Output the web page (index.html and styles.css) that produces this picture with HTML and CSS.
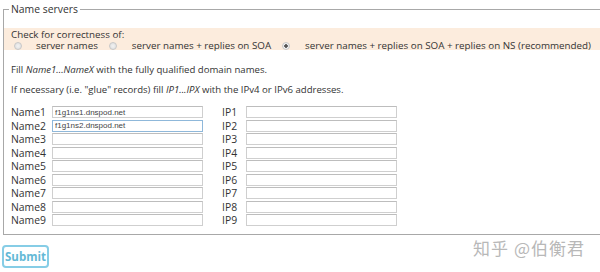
FILE: index.html
```html
<!DOCTYPE html>
<html lang="en">
<head>
  <meta charset="UTF-8" />
  <title>Name servers</title>
  <link rel="stylesheet" href="styles.css">
</head>
<body>
  <form class="ns-form">
    <fieldset class="ns-box">
      <legend>Name servers</legend>

      <div class="check-band">
        <div>Check for correctness of:</div>
        <div class="check-options">
          <label><input type="radio" name="check" class="radio first"> server names</label>
          <label><input type="radio" name="check" class="radio"> server names + replies on SOA</label>
          <label><input type="radio" name="check" class="radio" checked> server names + replies on SOA + replies on NS (recommended)</label>
        </div>
      </div>

      <p class="hint">Fill <em>Name1...NameX</em> with the fully qualified domain names.</p>
      <p class="hint second">If necessary (i.e. "glue" records) fill <em>IP1...IPX</em> with the IPv4 or IPv6 addresses.</p>

      <div class="ns-grid">
        <label class="name-label">Name1</label><input class="field" type="text" value="f1g1ns1.dnspod.net">
        <label class="ip-label">IP1</label><input class="field" type="text">
        <label class="name-label">Name2</label><input class="field focused" type="text" value="f1g1ns2.dnspod.net">
        <label class="ip-label">IP2</label><input class="field" type="text">
        <label class="name-label">Name3</label><input class="field" type="text">
        <label class="ip-label">IP3</label><input class="field" type="text">
        <label class="name-label">Name4</label><input class="field" type="text">
        <label class="ip-label">IP4</label><input class="field" type="text">
        <label class="name-label">Name5</label><input class="field" type="text">
        <label class="ip-label">IP5</label><input class="field" type="text">
        <label class="name-label">Name6</label><input class="field" type="text">
        <label class="ip-label">IP6</label><input class="field" type="text">
        <label class="name-label">Name7</label><input class="field" type="text">
        <label class="ip-label">IP7</label><input class="field" type="text">
        <label class="name-label">Name8</label><input class="field" type="text">
        <label class="ip-label">IP8</label><input class="field" type="text">
        <label class="name-label">Name9</label><input class="field" type="text">
        <label class="ip-label">IP9</label><input class="field" type="text">
      </div>
    </fieldset>

    <div class="footer">
      <button type="button" class="submit">Submit</button>
      <span class="watermark">知乎 @伯衡君</span>
    </div>
  </form>
</body>
</html>
```

FILE: styles.css
```css
body {
  margin: 0;
  padding: 1px 0 0 3px;
  font-family: "Open Sans", "Noto Sans", sans-serif;
  font-size: 10.4px;
  color: #333;
  background: #fff;
  overflow: hidden;
}
.ns-box {
  width: 640px;
  margin: 0;
  padding: 0 0 8px 7px;
  border: 1px solid #a8a8a8;
}
.ns-box legend {
  padding: 0 2px;
  margin-left: -2px;
  line-height: 16px;
}
.check-band {
  margin: 11px 0 0 -7px;
  padding: 1px 0 0 7px;
  background: #fcecdd;
  font-size: 9.8px;
  line-height: 11px;
  height: 21px;
}
.check-options {
  display: flex;
  align-items: center;
}
.check-options label {
  display: flex;
  align-items: center;
  white-space: nowrap;
}
.radio {
  appearance: none;
  -webkit-appearance: none;
  width: 8px;
  height: 8px;
  margin: 0 15px 0 11px;
  border: 1px solid #c8c8c8;
  border-radius: 50%;
  background: radial-gradient(circle, #f2f2f2 0, #dcdcdc 100%);
}
.radio.first {
  margin-left: 3px;
  margin-right: 14px;
}
.radio:checked {
  background: radial-gradient(circle, #555 0, #555 1.5px, #f4f4f4 2px, #e0e0e0 100%);
}
.hint {
  margin: 13px 0 0;
  font-size: 9.6px;
  line-height: 14px;
}
.hint.second {
  margin-top: 6px;
}
.ns-grid {
  display: grid;
  grid-template-columns: 41px 151px 43px 151px;
  grid-auto-rows: 12px;
  row-gap: 1.5px;
  margin-top: 9px;
  align-items: center;
}
.name-label,
.ip-label {
  line-height: 12px;
}
.ip-label {
  padding-left: 19px;
}
.field {
  box-sizing: border-box;
  width: 151px;
  height: 12px;
  margin: 0;
  padding: 0 2px;
  border: 1px solid #cfcfcf;
  border-top-color: #bdbdbd;
  font-family: "Liberation Sans", Arial, sans-serif;
  font-size: 8px;
  color: #444;
}
.field.focused {
  border-color: #8fb8da;
}
.footer {
  display: flex;
  justify-content: space-between;
  align-items: flex-start;
  margin: 10px 0 0 -1px;
  width: 583px;
}
.submit {
  width: 47px;
  height: 23px;
  padding: 0;
  border: 2px solid #86cde6;
  border-radius: 4px;
  background: #fff;
  color: #63b9d6;
  font-family: "Open Sans", "Noto Sans", sans-serif;
  font-size: 11.5px;
  font-weight: bold;
}
.watermark {
  margin-top: -10px;
  font-family: "Noto Sans CJK SC", sans-serif;
  font-size: 17px;
  color: #b8b8b8;
  letter-spacing: 1px;
}
```
